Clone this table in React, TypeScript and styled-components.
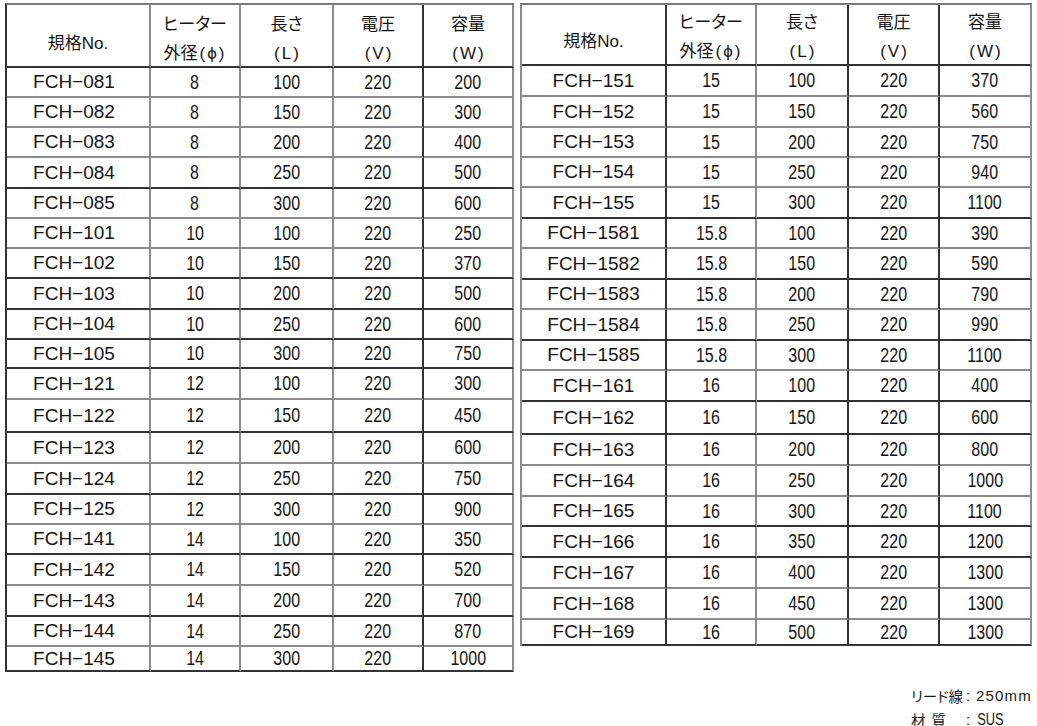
import React from "react";
import styled, { createGlobalStyle } from "styled-components";

const Global = createGlobalStyle`
  html, body { margin: 0; padding: 0; background: #ffffff; }
  body { font-family: "Liberation Sans", "Noto Sans CJK JP", sans-serif; color: #151515; }
`;

const DARK = "#333333";
const GRAY = "#8c8c8c";

type Tone = "d" | "g";
const tone = (t: Tone) => (t === "d" ? DARK : GRAY);

const Page = styled.div`
  width: 1037px;
  height: 726px;
  overflow: hidden;
  display: flex;
  flex-direction: column;
  box-sizing: border-box;
  padding: 3px 0 0 5px;
`;

const Tables = styled.div`
  display: flex;
  align-items: flex-start;
  gap: 6px;
`;

const Table = styled.table<{ $w: number; $left: Tone }>`
  width: ${(p) => p.$w}px;
  table-layout: fixed;
  border-collapse: separate;
  border-spacing: 0;
  border-top: 2px solid #7a7a7a;
  border-left: 2px solid ${(p) => tone(p.$left)};
`;

const Col = styled.col<{ $w: number }>`
  width: ${(p) => p.$w}px;
`;

const Row = styled.tr<{ $h: number }>`
  height: ${(p) => p.$h}px;
`;

const HeadCell = styled.th<{ $line: Tone; $col: Tone; $pt: number; $h: number }>`
  box-sizing: border-box;
  height: ${(p) => p.$h}px;
  padding: ${(p) => p.$pt}px 0 0 0;
  vertical-align: top;
  border-right: 2px solid ${(p) => tone(p.$col)};
  border-bottom: 2px solid ${(p) => tone(p.$line)};
  font-family: "Noto Sans CJK JP", "Liberation Sans", sans-serif;
  font-feature-settings: "palt";
  font-weight: 400;
  font-size: 17px;
  text-align: center;
  white-space: nowrap;
  overflow: hidden;
`;

const HeadLine = styled.div`
  height: 29px;
  line-height: 29px;
  overflow: visible;
`;

const HeadLat = styled.span`
  font-family: "Liberation Sans", sans-serif;
`;

const Paren = styled.span`
  font-family: "Liberation Sans", sans-serif;
  font-size: 17px;
  line-height: 29px;
  letter-spacing: 2px;
  padding-left: 2px;
`;

const Cell = styled.td<{ $line: Tone; $col: Tone; $shift?: number }>`
  box-sizing: border-box;
  padding: 0 ${(p) => p.$shift ?? 0}px 0 0;
  border-right: 2px solid ${(p) => tone(p.$col)};
  border-bottom: 2px solid ${(p) => tone(p.$line)};
  font-family: "Liberation Sans", sans-serif;
  font-size: 19px;
  line-height: 20px;
  text-align: center;
  white-space: nowrap;
  overflow: hidden;
`;

const Squeeze = styled.span<{ $k?: number; $size?: number }>`
  display: inline-block;
  font-size: ${(p) => p.$size ?? 20}px;
  transform: scaleX(${(p) => p.$k ?? 0.8});
  transform-origin: center;
`;

const Footer = styled.div`
  align-self: flex-end;
  margin: 13px 5px 0 0;
  display: grid;
  grid-template-columns: 51px 12px auto;
  row-gap: 2px;
  font-family: "Noto Sans CJK JP", "Liberation Sans", sans-serif;
  font-feature-settings: "palt";
  font-size: 14.5px;
  line-height: 22px;
  color: #1a1a1a;
`;

const Label = styled.span`
  white-space: nowrap;
`;

const LabelGap = styled.span`
  display: inline-block;
  width: 6px;
`;

const Colon = styled.span`
  font-family: "Liberation Sans", sans-serif;
  text-align: center;
`;

const Value = styled.span<{ $narrow?: boolean }>`
  padding-left: ${(p) => (p.$narrow ? 0 : 2)}px;
  font-family: "Liberation Sans", sans-serif;
  letter-spacing: ${(p) => (p.$narrow ? "0" : "1.2px")};
  font-size: 15px;
`;

type Item = [string, string, string, string, string, Tone, number];

const leftRows: Item[] = [
  ["081", "8", "100", "220", "200", "g", 30],
  ["082", "8", "150", "220", "300", "g", 30],
  ["083", "8", "200", "220", "400", "g", 30],
  ["084", "8", "250", "220", "500", "d", 31],
  ["085", "8", "300", "220", "600", "g", 30],
  ["101", "10", "100", "220", "250", "g", 30],
  ["102", "10", "150", "220", "370", "d", 30],
  ["103", "10", "200", "220", "500", "d", 31],
  ["104", "10", "250", "220", "600", "d", 30],
  ["105", "10", "300", "220", "750", "d", 29],
  ["121", "12", "100", "220", "300", "g", 31],
  ["122", "12", "150", "220", "450", "d", 33],
  ["123", "12", "200", "220", "600", "g", 31],
  ["124", "12", "250", "220", "750", "d", 31],
  ["125", "12", "300", "220", "900", "g", 30],
  ["141", "14", "100", "220", "350", "d", 30],
  ["142", "14", "150", "220", "520", "g", 31],
  ["143", "14", "200", "220", "700", "d", 31],
  ["144", "14", "250", "220", "870", "g", 30],
  ["145", "14", "300", "220", "1000", "d", 25],
];

const rightRows: Item[] = [
  ["151", "15", "100", "220", "370", "g", 31],
  ["152", "15", "150", "220", "560", "g", 31],
  ["153", "15", "200", "220", "750", "g", 30],
  ["154", "15", "250", "220", "940", "g", 30],
  ["155", "15", "300", "220", "1100", "d", 31],
  ["1581", "15.8", "100", "220", "390", "g", 30],
  ["1582", "15.8", "150", "220", "590", "d", 31],
  ["1583", "15.8", "200", "220", "790", "g", 30],
  ["1584", "15.8", "250", "220", "990", "d", 31],
  ["1585", "15.8", "300", "220", "1100", "g", 30],
  ["161", "16", "100", "220", "400", "d", 31],
  ["162", "16", "150", "220", "600", "d", 33],
  ["163", "16", "200", "220", "800", "g", 31],
  ["164", "16", "250", "220", "1000", "g", 31],
  ["165", "16", "300", "220", "1100", "d", 30],
  ["166", "16", "350", "220", "1200", "d", 31],
  ["167", "16", "400", "220", "1300", "g", 31],
  ["168", "16", "450", "220", "1300", "g", 31],
  ["169", "16", "500", "220", "1300", "d", 26],
];

type Spec = {
  widths: number[];
  cols: Tone[];
  left: Tone;
  headH: number;
  singlePt: number;
  doublePt: number;
  modelShift: number;
  rows: Item[];
};

const leftSpec: Spec = {
  widths: [144, 90, 93, 90, 90],
  cols: ["g", "g", "g", "d", "g"],
  left: "d",
  headH: 62,
  singlePt: 22,
  doublePt: 3,
  modelShift: 8,
  rows: leftRows,
};

const rightSpec: Spec = {
  widths: [145, 90, 92, 91, 92],
  cols: ["d", "g", "d", "d", "g"],
  left: "g",
  headH: 59,
  singlePt: 20,
  doublePt: 1,
  modelShift: 0,
  rows: rightRows,
};

const units = ["L", "V", "W"];
const unitTitles = ["長さ", "電圧", "容量"];

const SpecTable: React.FC<{ spec: Spec }> = ({ spec }) => {
  const total = spec.widths.reduce((a, b) => a + b, 0) + 2;
  const c = spec.cols;
  const h = spec.headH;
  return (
    <Table $w={total} $left={spec.left}>
      <colgroup>
        {spec.widths.map((w, i) => (
          <Col key={i} $w={w} />
        ))}
      </colgroup>
      <thead>
        <Row $h={h}>
          <HeadCell $line="d" $col={c[0]} $pt={spec.singlePt} $h={h}>
            <HeadLine>
              規格<HeadLat>No.</HeadLat>
            </HeadLine>
          </HeadCell>
          <HeadCell $line="d" $col={c[1]} $pt={spec.doublePt} $h={h}>
            <HeadLine>ヒーター</HeadLine>
            <HeadLine>
              外径<Paren>(ϕ)</Paren>
            </HeadLine>
          </HeadCell>
          {unitTitles.map((t, i) => (
            <HeadCell key={t} $line="d" $col={c[i + 2]} $pt={spec.doublePt} $h={h}>
              <HeadLine>{t}</HeadLine>
              <HeadLine>
                <Paren>({units[i]})</Paren>
              </HeadLine>
            </HeadCell>
          ))}
        </Row>
      </thead>
      <tbody>
        {spec.rows.map(([no, dia, len, volt, watt, line, rh]) => (
          <Row key={no} $h={rh}>
            <Cell $line={line} $col={c[0]} $shift={spec.modelShift}>
              FCH−{no}
            </Cell>
            <Cell $line={line} $col={c[1]}>
              <Squeeze>{dia}</Squeeze>
            </Cell>
            <Cell $line={line} $col={c[2]}>
              <Squeeze>{len}</Squeeze>
            </Cell>
            <Cell $line={line} $col={c[3]}>
              <Squeeze>{volt}</Squeeze>
            </Cell>
            <Cell $line={line} $col={c[4]}>
              <Squeeze>{watt}</Squeeze>
            </Cell>
          </Row>
        ))}
      </tbody>
    </Table>
  );
};

export default function App() {
  return (
    <>
      <Global />
      <Page>
        <Tables>
          <SpecTable spec={leftSpec} />
          <SpecTable spec={rightSpec} />
        </Tables>
        <Footer>
          <Label>リード線</Label>
          <Colon>:</Colon>
          <Value>250mm</Value>
          <Label>
            材<LabelGap />質
          </Label>
          <Colon>:</Colon>
          <Value $narrow>
            <Squeeze $k={0.8} $size={16}>
              SUS
            </Squeeze>
          </Value>
        </Footer>
      </Page>
    </>
  );
}
